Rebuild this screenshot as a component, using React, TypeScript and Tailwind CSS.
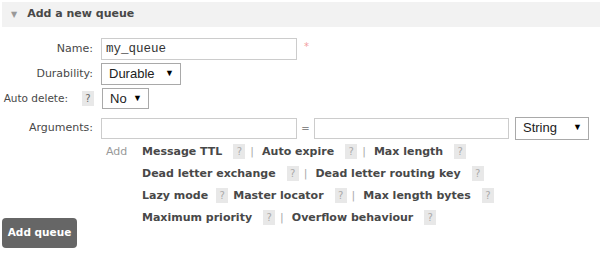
import type { ReactNode } from "react";

const Help = ({ dark = false }: { dark?: boolean }) => (
  <span
    className={`inline-flex items-center justify-center w-[12px] h-[15px] bg-[#e8e8e8] text-[10px] font-normal ${
      dark ? "text-[#666]" : "text-[#aaa]"
    }`}
  >
    ?
  </span>
);

const Pipe = () => <span className="ml-[5px] mr-[8px] font-normal text-[#aaa]">|</span>;

const Arg = ({ children, gap = "ml-[11px]" }: { children: ReactNode; gap?: string }) => (
  <>
    <span>{children}</span>
    <span className={gap}>
      <Help />
    </span>
  </>
);

const Select = ({ label, width }: { label: string; width: string }) => (
  <div
    className={`${width} h-full flex items-center justify-between pl-[7px] pr-[6px] border border-[#a9a9a9] bg-white text-[13px] text-[#222] font-["Liberation_Sans",Arial,sans-serif]`}
  >
    <span>{label}</span>
    <span className="text-[9px] text-black">▼</span>
  </div>
);

const App = () => {
  return (
    <div className="w-[600px] h-[257px] bg-white pt-[2px] pl-[2px] font-['DejaVu_Sans',Verdana,sans-serif] text-[11px] text-[#484848] overflow-hidden">
      <div className="h-[25px] bg-[#f2f2f2] flex items-center pl-[9px]">
        <span className="text-[8px] text-[#999] mr-[10px]">▼</span>
        <h2 className="font-bold text-[11px] text-[#484848]">Add a new queue</h2>
      </div>

      <div className="mt-[11px]">
        <div className="flex items-center h-[22px]">
          <label className="w-[91px] text-right">Name:</label>
          <div className="ml-[8px] w-[196px] h-full border border-[#ccc] flex items-center pl-[4px] font-['Liberation_Mono','Courier_New',monospace] text-[12.5px] text-[#333]">
            my_queue
          </div>
          <span className="ml-[7px] self-start mt-[1px] text-[10px] text-[#f2a0a0]">*</span>
        </div>

        <div className="flex items-center h-[22px] mt-[3px]">
          <label className="w-[91px] text-right">Durability:</label>
          <div className="ml-[8px] h-full">
            <Select label="Durable" width="w-[80px]" />
          </div>
        </div>

        <div className="flex items-center h-[21px] mt-[3px]">
          <label className="w-[92px] flex items-center justify-end gap-[14px] whitespace-nowrap">
            <span className="text-[10.5px]">Auto delete:</span>
            <Help dark />
          </label>
          <div className="ml-[8px] h-full">
            <Select label="No" width="w-[47px]" />
          </div>
        </div>

        <div className="flex items-center h-[22px] mt-[8px]">
          <label className="w-[91px] text-right">Arguments:</label>
          <div className="ml-[8px] w-[196px] h-[21px] border border-[#ccc]" />
          <span className="w-[17px] text-center text-[10px] text-[#888]">=</span>
          <div className="w-[195px] h-[21px] border border-[#ccc]" />
          <div className="ml-[6px] h-[23px]">
            <Select label="String" width="w-[74px]" />
          </div>
        </div>

        <div className="flex mt-[2px]">
          <span className="ml-[104px] w-[36px] leading-[22px] text-[#999]">Add</span>
          <div className="font-bold text-[#484848]">
            <div className="flex items-center h-[22px]">
              <Arg>Message TTL</Arg>
              <Pipe />
              <Arg>Auto expire</Arg>
              <Pipe />
              <Arg>Max length</Arg>
            </div>
            <div className="flex items-center h-[22px]">
              <Arg>Dead letter exchange</Arg>
              <Pipe />
              <Arg>Dead letter routing key</Arg>
            </div>
            <div className="flex items-center h-[22px]">
              <Arg gap="ml-[8px]">Lazy mode</Arg>
              <span className="w-[5px]" />
              <Arg>Master locator</Arg>
              <Pipe />
              <Arg>Max length bytes</Arg>
            </div>
            <div className="flex items-center h-[22px]">
              <Arg>Maximum priority</Arg>
              <Pipe />
              <Arg>Overflow behaviour</Arg>
            </div>
          </div>
        </div>

        <button className="block mt-[-11px] w-[75px] h-[30px] rounded-[4px] bg-[#666] text-white font-bold text-[10.5px]">
          Add queue
        </button>
      </div>
    </div>
  );
};

export default App;
